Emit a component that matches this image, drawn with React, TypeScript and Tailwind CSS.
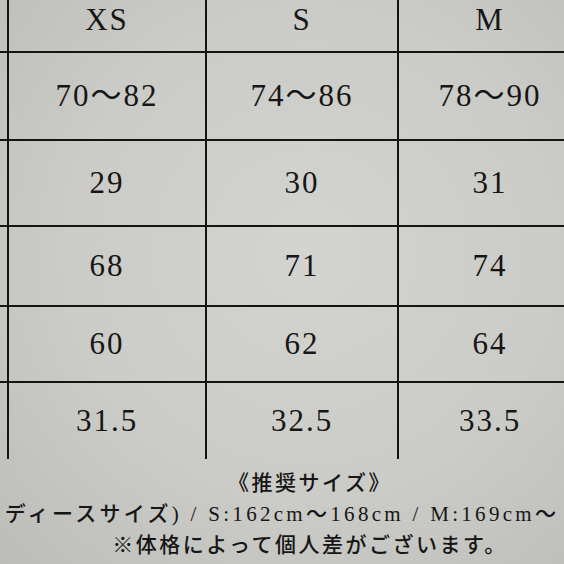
const sizes = ["XS", "S", "M"];

const rows: { h: string; values: string[] }[] = [
  { h: "h-[88px]", values: ["70〜82", "74〜86", "78〜90"] },
  { h: "h-[86px]", values: ["29", "30", "31"] },
  { h: "h-[80px]", values: ["68", "71", "74"] },
  { h: "h-[76px]", values: ["60", "62", "64"] },
  { h: "h-[76px]", values: ["31.5", "32.5", "33.5"] },
];

const serif = "font-['Liberation_Serif','Noto_Sans_CJK_JP',serif]";

function Cell({ children, last }: { children?: React.ReactNode; last?: boolean }) {
  return (
    <div
      className={
        "flex items-center justify-center border-[#141414] " +
        (last ? "border-r-0" : "border-r-2")
      }
    >
      {children}
    </div>
  );
}

export default function App() {
  return (
    <div className="w-[564px] h-[564px] overflow-hidden bg-[#c9c9c6] bg-[radial-gradient(ellipse_at_55%_45%,_#d3d3d0_0%,_#cbcbc8_55%,_#bcbcb9_100%)] text-[#161616]">
      {/* size table, clipped on the left and right like the photo */}
      <div className={`w-[581px] ${serif} text-[31px] tracking-[2px]`}>
        <div className="grid grid-cols-[9px_198px_192px_182px] h-[53px] border-b-2 border-[#141414]">
          <Cell />
          {sizes.map((s, i) => (
            <Cell key={s} last={i === 2}>
              <span className="-mt-[10px]">{s}</span>
            </Cell>
          ))}
        </div>
        {rows.map((row, r) => (
          <div
            key={r}
            className={
              "grid grid-cols-[9px_198px_192px_182px] border-[#141414] " +
              row.h +
              (r === rows.length - 1 ? "" : " border-b-2")
            }
          >
            <Cell />
            {row.values.map((v, i) => (
              <Cell key={i} last={i === 2}>
                <span>{v}</span>
              </Cell>
            ))}
          </div>
        ))}
      </div>

      {/* recommended size notes */}
      <div className={`mt-[9px] ${serif} text-[21px] leading-[31px] font-medium`}>
        <div className="pl-[56px] text-center tracking-[2.5px]">《推奨サイズ》</div>
        <div className="flex justify-center whitespace-nowrap tracking-[3.3px]">
          <span>ディースサイズ) / S:162cm〜168cm / M:169cm〜</span>
        </div>
        <div className="pl-[56px] text-center tracking-[2.5px]">※体格によって個人差がございます。</div>
      </div>
    </div>
  );
}
